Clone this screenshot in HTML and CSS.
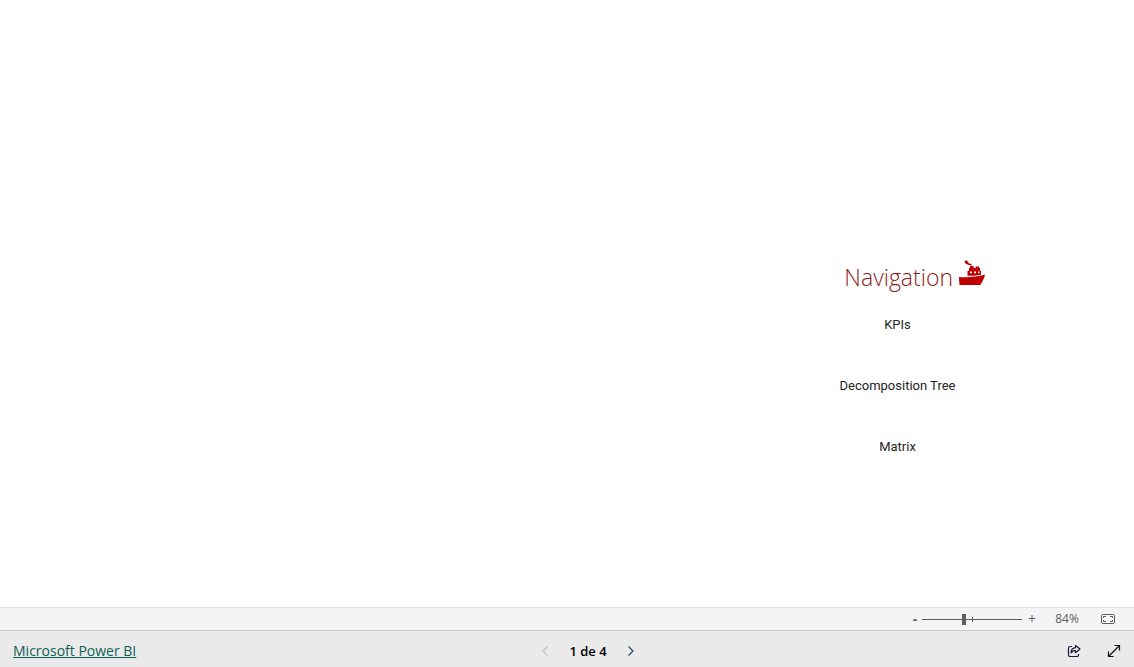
FILE: index.html
```html
<!DOCTYPE html>
<html lang="es">
<head>
<meta charset="utf-8">
<meta name="viewport" content="width=device-width, initial-scale=1">
<title>Microsoft Power BI</title>
<link rel="stylesheet" href="styles.css">
</head>
<body>
<main class="canvas">
  <nav class="menu" aria-labelledby="menu-title">
    <div class="menu-head">
      <h1 class="menu-title" id="menu-title">Navigation</h1>
      <svg class="ship" viewBox="0 0 28 28" aria-hidden="true">
        <path d="M7 2C8.200 1 9.800 1.800 10 3.200l1.500 1.600h2V6.200h-2.300L9.800 5.400C8 5.600 6.200 3.600 7 2z"/>
        <path fill-rule="evenodd" d="M12 7h3.600v2h2V7.500h3.500V9H22v3h1v3.800L16 16.800H9.500V12H11V9h1zM12 12.500v1.800h2v-1.800zm4 0v1.800h2v-1.800zm4 0v1.800h1.500v-1.800z"/>
        <path d="M1 18c9 .8 18-.3 26-2.500-.5 3.700-3 7.500-4.500 10.500H1.500C1.200 23 1 20.500 1 18z"/>
      </svg>
    </div>
    <div class="menu-items">
      <button class="menu-item" type="button">KPIs</button>
      <button class="menu-item" type="button">Decomposition Tree</button>
      <button class="menu-item" type="button">Matrix</button>
    </div>
  </nav>
</main>
<div class="zoombar">
  <button class="zoom-step minus" type="button" aria-label="Zoom out">-</button>
  <div class="zoom-track">
    <input class="zoom-range" type="range" min="0" max="100" value="42" aria-label="Zoom">
  </div>
  <button class="zoom-step" type="button" aria-label="Zoom in">+</button>
  <button class="zoom-value" type="button">84%</button>
  <button class="icon-button fit" type="button" aria-label="Fit to page">
    <svg width="14" height="10" viewBox="0 0 14 10" fill="none" stroke="#605e5c" aria-hidden="true">
      <rect x=".5" y=".5" width="13" height="9" rx="1"/>
      <path d="M5 2.500H2.500V4M9 2.500h2.500V4M5 7.500H2.500V6M9 7.500h2.500V6"/>
    </svg>
  </button>
</div>
<footer class="footer">
  <a class="brand" href="#">Microsoft Power BI</a>
  <div class="pager">
    <button class="icon-button" type="button" aria-label="Previous page" disabled>
      <svg width="8" height="12" viewBox="0 0 8 12" fill="none" stroke="#c4c4c4" stroke-width="1.200" aria-hidden="true"><path d="M6.500 1.500L2 6l4.500 4.500"/></svg>
    </button>
    <span class="page-label">1 de 4</span>
    <button class="icon-button" type="button" aria-label="Next page">
      <svg width="8" height="12" viewBox="0 0 8 12" fill="none" stroke="#2b4c5c" stroke-width="1.300" aria-hidden="true"><path d="M1.500 1.500L6 6l-4.500 4.500"/></svg>
    </button>
  </div>
  <div class="actions">
    <button class="icon-button" type="button" aria-label="Share">
      <svg width="14" height="14" viewBox="0 0 14 14" fill="none" stroke="#201a3a" stroke-width="1.200" stroke-linejoin="round" aria-hidden="true">
        <path d="M5 2.500H3A1.500 1.500 0 0 0 1.500 4v7A1.500 1.500 0 0 0 3 12.500h7a1.500 1.500 0 0 0 1.500-1.500v-1"/>
        <path d="M8.500 1.500L13 5 8.500 8.700V6.600C6.500 6.500 5.200 7.200 4 8.800 4.200 5.800 5.800 3.800 8.500 3.600z"/>
      </svg>
    </button>
    <button class="icon-button" type="button" aria-label="Full screen">
      <svg width="14" height="14" viewBox="0 0 14 14" fill="none" stroke="#111" stroke-width="1.200" aria-hidden="true">
        <path d="M1.500 12.500l11-11M7.500 1.500h5v5M1.500 7.500v5h5"/>
      </svg>
    </button>
  </div>
</footer>
</body>
</html>
```
FILE: styles.css
```css
* {
  box-sizing: border-box;
}

body {
  margin: 0;
  min-height: 100vh;
  display: flex;
  flex-direction: column;
  background: #fff;
  font-family: "Open Sans", "Noto Sans", sans-serif;
  color: #252423;
}

button {
  padding: 0;
  border: 0;
  background: none;
  color: inherit;
  font: inherit;
  cursor: pointer;
}

.canvas {
  flex: 1;
  display: flex;
  align-items: center;
  justify-content: flex-end;
  padding: 129px 148px 0 16px;
}

.menu {
  display: flex;
  flex-direction: column;
  width: 151px;
}

.menu-head {
  display: flex;
  align-items: center;
  justify-content: flex-end;
  gap: 5px;
  height: 34px;
}

.menu-title {
  margin: 0;
  font-size: 23px;
  font-weight: 300;
  line-height: 34px;
  color: #8c1c1c;
}

.ship {
  width: 28px;
  height: 28px;
  margin-bottom: 8px;
  fill: #c00000;
}

.menu-items {
  display: flex;
  flex-direction: column;
  width: 125px;
}

.menu-item {
  height: 61px;
  font-family: Roboto, sans-serif;
  font-size: 13px;
  white-space: nowrap;
}

.zoombar {
  display: flex;
  align-items: center;
  justify-content: flex-end;
  height: 23px;
  padding-right: 19px;
  border-top: 1px solid #e1e1e1;
  background: #f4f4f4;
  color: #605e5c;
}

.zoom-step {
  width: 12px;
  font-size: 14px;
  line-height: 20px;
}

.minus {
  width: 6px;
  font-weight: 700;
}

.zoom-track {
  display: flex;
  width: 100px;
  margin: 0 4px;
}

.zoom-range {
  appearance: none;
  width: 100%;
  height: 11px;
  margin: 0;
  background:
    linear-gradient(#605e5c, #605e5c) 50px 50% / 1px 5px no-repeat,
    linear-gradient(#605e5c, #605e5c) 0 50% / 100% 1px no-repeat;
}

.zoom-range::-webkit-slider-thumb {
  appearance: none;
  width: 4px;
  height: 11px;
  background: #605e5c;
}

.zoom-value {
  width: 24px;
  margin: 0 22px 0 17px;
  font-size: 12px;
  line-height: 20px;
}

.icon-button {
  display: flex;
  align-items: center;
  justify-content: center;
}

.footer {
  display: grid;
  grid-template-columns: 1fr auto 1fr;
  align-items: center;
  height: 37px;
  padding: 3px 13px 0;
  border-top: 1px solid #c8c8c8;
  background: #eaeaea;
}

.brand {
  justify-self: start;
  font-size: 14px;
  line-height: 20px;
  color: #0b6158;
}

.pager {
  display: flex;
  align-items: center;
  gap: 20px;
  margin-left: 42px;
}

.page-label {
  font-size: 13px;
  font-weight: 600;
  line-height: 20px;
  color: #000;
}

.actions {
  display: flex;
  justify-self: end;
  gap: 26px;
}
```
